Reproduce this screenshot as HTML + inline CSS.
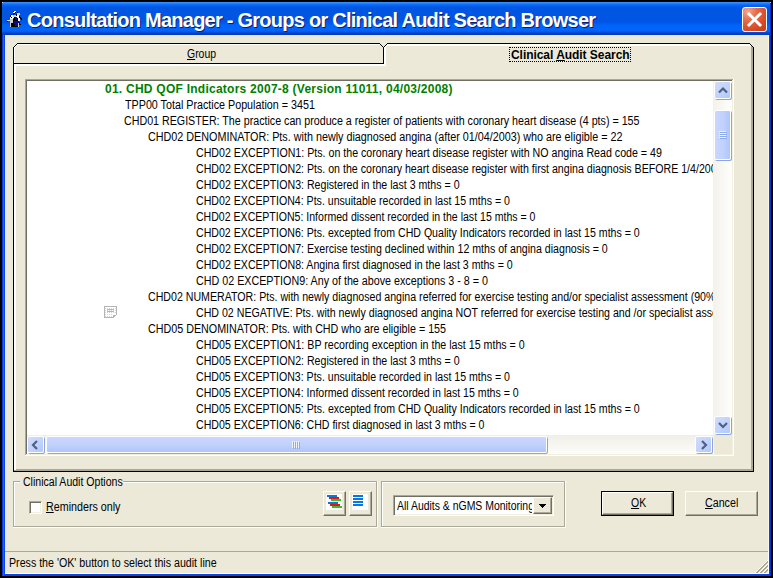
<!DOCTYPE html>
<html><head><meta charset="utf-8">
<style>
*{margin:0;padding:0;box-sizing:border-box}
html,body{width:773px;height:578px;overflow:hidden;background:#000}
body{position:relative;font-family:"Liberation Sans",sans-serif;font-size:11px;color:#000}
.a{position:absolute}
#frame{left:2px;top:2px;width:769px;height:574px;background:#0846ec}
#title{left:2px;top:2px;width:769px;height:33px;
 background:linear-gradient(to bottom,#3d95ff 0px,#2a85ff 1px,#0a66f4 3px,#0055e3 6px,#0055e4 20px,#0062f8 23px,#0066ff 28px,#0058ec 30px,#0042c8 31px,#0038b4 33px)}
#ttext{left:27px;top:9px;font-size:20px;font-weight:bold;color:#fff;letter-spacing:-0.75px;white-space:nowrap;text-shadow:1px 1px 0 #0a1e6e}
#close{left:742px;top:7px;width:25px;height:25px;border:1px solid #fff;border-radius:3px;
 background:radial-gradient(circle at 20% 15%,#f0a890 0%,#e46a4a 35%,#d84a26 70%,#c43a14 100%)}
#client{left:5px;top:35px;width:764px;height:539px;background:#ece9d8}
#list{left:27px;top:81px;width:687px;height:354px;background:#fff;overflow:hidden}
.ln{position:absolute;white-space:nowrap;line-height:16px;font-size:12px;transform:scaleX(0.885);transform-origin:0 0}
.g{color:#008000;font-weight:bold;letter-spacing:0.25px;transform:none}
.lbl{position:absolute;white-space:nowrap;line-height:16px;font-size:12px;transform:scaleX(0.87);transform-origin:0 0}
u{text-decoration:underline;text-underline-offset:1px;text-decoration-thickness:1px}
.track{background:linear-gradient(to right,#f3f1ec,#fefefb)}
.htrack{background:linear-gradient(to bottom,#f0eee8,#fdfdf9)}
.sb{position:absolute;border:1px solid #fff;border-radius:2px;
 background:linear-gradient(135deg,#d2dcfc 0%,#c3d3fd 50%,#b0c8fb 100%);
 box-shadow:1px 1px 0 #8ca6dc}
.btn{position:absolute;background:#ece9d8;border:1px solid;border-color:#fff #716f64 #716f64 #fff;box-shadow:inset -1px -1px 0 #aca899}
</style></head><body>
<div class="a" id="frame"></div>
<div class="a" id="title"></div>
<svg class="a" style="left:6px;top:11px" width="16" height="16" shape-rendering="crispEdges"><rect x="7" y="0" width="1" height="1" fill="#000"/><rect x="8" y="0" width="1" height="1" fill="#fff"/><rect x="9" y="0" width="1" height="1" fill="#fff"/><rect x="7" y="1" width="1" height="1" fill="#fff"/><rect x="8" y="1" width="1" height="1" fill="#fff"/><rect x="9" y="1" width="1" height="1" fill="#000"/><rect x="11" y="1" width="1" height="1" fill="#000"/><rect x="7" y="2" width="1" height="1" fill="#000"/><rect x="8" y="2" width="1" height="1" fill="#000"/><rect x="11" y="2" width="1" height="1" fill="#e8d4b0"/><rect x="12" y="2" width="1" height="1" fill="#e8d4b0"/><rect x="13" y="2" width="1" height="1" fill="#e8d4b0"/><rect x="5" y="3" width="1" height="1" fill="#000"/><rect x="7" y="3" width="1" height="1" fill="#000"/><rect x="10" y="3" width="1" height="1" fill="#000"/><rect x="11" y="3" width="1" height="1" fill="#e8d4b0"/><rect x="12" y="3" width="1" height="1" fill="#e8d4b0"/><rect x="13" y="3" width="1" height="1" fill="#e8d4b0"/><rect x="4" y="4" width="1" height="1" fill="#000"/><rect x="5" y="4" width="1" height="1" fill="#fff"/><rect x="6" y="4" width="1" height="1" fill="#fff"/><rect x="7" y="4" width="1" height="1" fill="#d4d0c8"/><rect x="8" y="4" width="1" height="1" fill="#d4d0c8"/><rect x="9" y="4" width="1" height="1" fill="#d4d0c8"/><rect x="10" y="4" width="1" height="1" fill="#000"/><rect x="11" y="4" width="1" height="1" fill="#fff"/><rect x="12" y="4" width="1" height="1" fill="#fff"/><rect x="4" y="5" width="1" height="1" fill="#000"/><rect x="5" y="5" width="1" height="1" fill="#fff"/><rect x="6" y="5" width="1" height="1" fill="#fff"/><rect x="7" y="5" width="1" height="1" fill="#d4d0c8"/><rect x="8" y="5" width="1" height="1" fill="#d4d0c8"/><rect x="9" y="5" width="1" height="1" fill="#d4d0c8"/><rect x="10" y="5" width="1" height="1" fill="#fff"/><rect x="11" y="5" width="1" height="1" fill="#fff"/><rect x="12" y="5" width="1" height="1" fill="#fff"/><rect x="13" y="5" width="1" height="1" fill="#000"/><rect x="4" y="6" width="1" height="1" fill="#fff"/><rect x="5" y="6" width="1" height="1" fill="#000"/><rect x="6" y="6" width="1" height="1" fill="#fff"/><rect x="7" y="6" width="1" height="1" fill="#fff"/><rect x="8" y="6" width="1" height="1" fill="#000"/><rect x="9" y="6" width="1" height="1" fill="#0a0a9a"/><rect x="10" y="6" width="1" height="1" fill="#0a0a9a"/><rect x="11" y="6" width="1" height="1" fill="#fff"/><rect x="12" y="6" width="1" height="1" fill="#fff"/><rect x="13" y="6" width="1" height="1" fill="#000"/><rect x="14" y="6" width="1" height="1" fill="#000"/><rect x="4" y="7" width="1" height="1" fill="#fff"/><rect x="5" y="7" width="1" height="1" fill="#fff"/><rect x="6" y="7" width="1" height="1" fill="#fff"/><rect x="8" y="7" width="1" height="1" fill="#000"/><rect x="9" y="7" width="1" height="1" fill="#0a0a9a"/><rect x="10" y="7" width="1" height="1" fill="#0a0a9a"/><rect x="11" y="7" width="1" height="1" fill="#000"/><rect x="12" y="7" width="1" height="1" fill="#fff"/><rect x="13" y="7" width="1" height="1" fill="#fff"/><rect x="14" y="7" width="1" height="1" fill="#000"/><rect x="15" y="7" width="1" height="1" fill="#000"/><rect x="4" y="8" width="1" height="1" fill="#d4d0c8"/><rect x="5" y="8" width="1" height="1" fill="#d4d0c8"/><rect x="6" y="8" width="1" height="1" fill="#d4d0c8"/><rect x="7" y="8" width="1" height="1" fill="#000"/><rect x="8" y="8" width="1" height="1" fill="#000"/><rect x="9" y="8" width="1" height="1" fill="#0a0a9a"/><rect x="10" y="8" width="1" height="1" fill="#0a0a9a"/><rect x="11" y="8" width="1" height="1" fill="#000"/><rect x="12" y="8" width="1" height="1" fill="#fff"/><rect x="13" y="8" width="1" height="1" fill="#fff"/><rect x="15" y="8" width="1" height="1" fill="#000"/><rect x="1" y="9" width="1" height="1" fill="#e8d4b0"/><rect x="2" y="9" width="1" height="1" fill="#e8d4b0"/><rect x="3" y="9" width="1" height="1" fill="#e8d4b0"/><rect x="4" y="9" width="1" height="1" fill="#d4d0c8"/><rect x="5" y="9" width="1" height="1" fill="#d4d0c8"/><rect x="6" y="9" width="1" height="1" fill="#d4d0c8"/><rect x="7" y="9" width="1" height="1" fill="#000"/><rect x="8" y="9" width="1" height="1" fill="#000"/><rect x="9" y="9" width="1" height="1" fill="#000"/><rect x="10" y="9" width="1" height="1" fill="#000"/><rect x="11" y="9" width="1" height="1" fill="#000"/><rect x="12" y="9" width="1" height="1" fill="#fff"/><rect x="13" y="9" width="1" height="1" fill="#fff"/><rect x="1" y="10" width="1" height="1" fill="#000"/><rect x="4" y="10" width="1" height="1" fill="#d4d0c8"/><rect x="5" y="10" width="1" height="1" fill="#d4d0c8"/><rect x="6" y="10" width="1" height="1" fill="#d4d0c8"/><rect x="7" y="10" width="1" height="1" fill="#000"/><rect x="8" y="10" width="1" height="1" fill="#0a0a9a"/><rect x="9" y="10" width="1" height="1" fill="#0a0a9a"/><rect x="10" y="10" width="1" height="1" fill="#0a0a9a"/><rect x="11" y="10" width="1" height="1" fill="#0a0a9a"/><rect x="12" y="10" width="1" height="1" fill="#000"/><rect x="4" y="11" width="1" height="1" fill="#d4d0c8"/><rect x="5" y="11" width="1" height="1" fill="#d4d0c8"/><rect x="6" y="11" width="1" height="1" fill="#d4d0c8"/><rect x="7" y="11" width="1" height="1" fill="#000"/><rect x="8" y="11" width="1" height="1" fill="#0a0a9a"/><rect x="9" y="11" width="1" height="1" fill="#0a0a9a"/><rect x="10" y="11" width="1" height="1" fill="#0a0a9a"/><rect x="11" y="11" width="1" height="1" fill="#0a0a9a"/><rect x="12" y="11" width="1" height="1" fill="#0a0a9a"/><rect x="13" y="11" width="1" height="1" fill="#000"/><rect x="4" y="12" width="1" height="1" fill="#d4d0c8"/><rect x="5" y="12" width="1" height="1" fill="#000"/><rect x="6" y="12" width="1" height="1" fill="#000"/><rect x="7" y="12" width="1" height="1" fill="#000"/><rect x="8" y="12" width="1" height="1" fill="#0a0a9a"/><rect x="9" y="12" width="1" height="1" fill="#0a0a9a"/><rect x="10" y="12" width="1" height="1" fill="#0a0a9a"/><rect x="11" y="12" width="1" height="1" fill="#0a0a9a"/><rect x="12" y="12" width="1" height="1" fill="#d4d0c8"/><rect x="13" y="12" width="1" height="1" fill="#000"/><rect x="4" y="13" width="1" height="1" fill="#d4d0c8"/><rect x="5" y="13" width="1" height="1" fill="#000"/><rect x="6" y="13" width="1" height="1" fill="#000"/><rect x="7" y="13" width="1" height="1" fill="#000"/><rect x="8" y="13" width="1" height="1" fill="#000"/><rect x="9" y="13" width="1" height="1" fill="#0a0a9a"/><rect x="10" y="13" width="1" height="1" fill="#0a0a9a"/><rect x="11" y="13" width="1" height="1" fill="#0a0a9a"/><rect x="12" y="13" width="1" height="1" fill="#d4d0c8"/><rect x="13" y="13" width="1" height="1" fill="#000"/><rect x="14" y="13" width="1" height="1" fill="#000"/><rect x="4" y="14" width="1" height="1" fill="#d4d0c8"/><rect x="5" y="14" width="1" height="1" fill="#000"/><rect x="6" y="14" width="1" height="1" fill="#000"/><rect x="7" y="14" width="1" height="1" fill="#000"/><rect x="8" y="14" width="1" height="1" fill="#000"/><rect x="9" y="14" width="1" height="1" fill="#0a0a9a"/><rect x="10" y="14" width="1" height="1" fill="#0a0a9a"/><rect x="11" y="14" width="1" height="1" fill="#0a0a9a"/><rect x="12" y="14" width="1" height="1" fill="#d4d0c8"/><rect x="4" y="15" width="1" height="1" fill="#d4d0c8"/><rect x="5" y="15" width="1" height="1" fill="#000"/><rect x="6" y="15" width="1" height="1" fill="#000"/><rect x="7" y="15" width="1" height="1" fill="#000"/><rect x="8" y="15" width="1" height="1" fill="#000"/><rect x="9" y="15" width="1" height="1" fill="#000"/><rect x="10" y="15" width="1" height="1" fill="#000"/><rect x="11" y="15" width="1" height="1" fill="#000"/><rect x="12" y="15" width="1" height="1" fill="#d4d0c8"/></svg>
<div class="a" id="ttext">Consultation Manager - Groups or Clinical Audit Search Browser</div>
<div class="a" id="close"></div>
<svg class="a" style="left:742px;top:7px" width="25" height="25" viewBox="0 0 25 25">
 <path d="M7 7 L18 18 M18 7 L7 18" stroke="#fff" stroke-width="3" stroke-linecap="square"/>
</svg>
<div class="a" id="client"></div>
<div class="a" style="left:768px;top:35px;width:1px;height:539px;background:#fbf6e2"></div><div class="a" style="left:770px;top:2px;width:1px;height:574px;background:#0434d0"></div><div class="a" style="left:770px;top:2px;width:1px;height:1px;background:#90b8ff"></div><div class="a" style="left:2px;top:2px;width:1px;height:1px;background:#c8dcff"></div>
<div class="a" style="left:2px;top:35px;width:1px;height:541px;background:#0838d8"></div><div class="a" style="left:3px;top:35px;width:1px;height:541px;background:#1868f0"></div>

<!-- tab labels -->
<div class="lbl" style="left:187px;top:46px"><u>G</u>roup</div>
<div class="lbl" style="left:511px;top:47px;font-weight:bold;letter-spacing:-0.05px;transform:none">Clinical <u>A</u>udit Search</div>
<div class="a" style="left:509px;top:47px;width:122px;height:15px;border:1px dotted #000"></div>

<!-- listbox -->
<div class="a" style="left:27px;top:81px;width:705px;height:373px;background:#ece9d8"></div>
<div class="a" id="list"><div class="ln g" style="left:78px;top:0px">01. CHD QOF Indicators 2007-8 (Version 11011, 04/03/2008)</div><div class="ln" style="left:98px;top:16px;transform:scaleX(0.8945)">TPP00 Total Practice Population = 3451</div><div class="ln" style="left:97px;top:32px;transform:scaleX(0.8902)">CHD01 REGISTER: The practice can produce a register of patients with coronary heart disease (4 pts) = 155</div><div class="ln" style="left:121px;top:48px;transform:scaleX(0.8983)">CHD02 DENOMINATOR: Pts. with newly diagnosed angina (after 01/04/2003) who are eligible = 22</div><div class="ln" style="left:169px;top:64px;transform:scaleX(0.8869)">CHD02 EXCEPTION1: Pts. on the coronary heart disease register with NO angina Read code = 49</div><div class="ln" style="left:169px;top:80px">CHD02 EXCEPTION2: Pts. on the coronary heart disease register with first angina diagnosis BEFORE 1/4/2003</div><div class="ln" style="left:169px;top:96px;transform:scaleX(0.8850)">CHD02 EXCEPTION3: Registered in the last 3 mths = 0</div><div class="ln" style="left:169px;top:112px;transform:scaleX(0.8822)">CHD02 EXCEPTION4: Pts. unsuitable recorded in last 15 mths = 0</div><div class="ln" style="left:169px;top:128px;transform:scaleX(0.8798)">CHD02 EXCEPTION5: Informed dissent recorded in the last 15 mths = 0</div><div class="ln" style="left:169px;top:144px;transform:scaleX(0.8830)">CHD02 EXCEPTION6: Pts. excepted from CHD Quality Indicators recorded in last 15 mths = 0</div><div class="ln" style="left:169px;top:160px;transform:scaleX(0.8850)">CHD02 EXCEPTION7: Exercise testing declined within 12 mths of angina diagnosis = 0</div><div class="ln" style="left:169px;top:176px;transform:scaleX(0.8850)">CHD02 EXCEPTION8: Angina first diagnosed in the last 3 mths = 0</div><div class="ln" style="left:169px;top:192px;transform:scaleX(0.8943)">CHD 02 EXCEPTION9: Any of the above exceptions 3 - 8 = 0</div><div class="ln" style="left:121px;top:208px">CHD02 NUMERATOR: Pts. with newly diagnosed angina referred for exercise testing and/or specialist assessment (90%)</div><div class="ln" style="left:169px;top:224px">CHD 02 NEGATIVE: Pts. with newly diagnosed angina NOT referred for exercise testing and /or specialist assessment</div><div class="ln" style="left:121px;top:240px;transform:scaleX(0.8941)">CHD05 DENOMINATOR: Pts. with CHD who are eligible = 155</div><div class="ln" style="left:169px;top:256px;transform:scaleX(0.8877)">CHD05 EXCEPTION1: BP recording exception in the last 15 mths = 0</div><div class="ln" style="left:169px;top:272px;transform:scaleX(0.8850)">CHD05 EXCEPTION2: Registered in the last 3 mths = 0</div><div class="ln" style="left:169px;top:288px;transform:scaleX(0.8822)">CHD05 EXCEPTION3: Pts. unsuitable recorded in last 15 mths = 0</div><div class="ln" style="left:169px;top:304px;transform:scaleX(0.8822)">CHD05 EXCEPTION4: Informed dissent recorded in last 15 mths = 0</div><div class="ln" style="left:169px;top:320px;transform:scaleX(0.8830)">CHD05 EXCEPTION5: Pts. excepted from CHD Quality Indicators recorded in last 15 mths = 0</div><div class="ln" style="left:169px;top:336px;transform:scaleX(0.8819)">CHD05 EXCEPTION6: CHD first diagnosed in last 3 mths = 0</div></div>
<svg class="a" style="left:104px;top:306px" width="13" height="12" viewBox="0 0 13 12" shape-rendering="crispEdges"><path d="M0.5 0.5H12.5V8.5L9.5 11.5H0.5Z" fill="#fff" stroke="#b4b4b4"/><g fill="#f0f000"><rect x="1" y="2" width="1" height="1"/><rect x="3" y="2" width="1" height="1"/><rect x="5" y="2" width="1" height="1"/><rect x="7" y="2" width="1" height="1"/><rect x="9" y="2" width="1" height="1"/><rect x="11" y="2" width="1" height="1"/><rect x="1" y="4" width="1" height="1"/><rect x="3" y="4" width="1" height="1"/><rect x="5" y="4" width="1" height="1"/><rect x="7" y="4" width="1" height="1"/><rect x="9" y="4" width="1" height="1"/><rect x="11" y="4" width="1" height="1"/><rect x="1" y="6" width="1" height="1"/><rect x="3" y="6" width="1" height="1"/><rect x="5" y="6" width="1" height="1"/><rect x="7" y="6" width="1" height="1"/><rect x="9" y="6" width="1" height="1"/><rect x="11" y="6" width="1" height="1"/><rect x="1" y="8" width="1" height="1"/><rect x="3" y="8" width="1" height="1"/><rect x="5" y="8" width="1" height="1"/><rect x="7" y="8" width="1" height="1"/><rect x="1" y="10" width="1" height="1"/><rect x="3" y="10" width="1" height="1"/><rect x="5" y="10" width="1" height="1"/><rect x="7" y="10" width="1" height="1"/></g><rect x="3" y="3" width="7" height="1" fill="#b4b4b4"/><rect x="3" y="5" width="7" height="1" fill="#b4b4b4"/><path d="M9.5 11V9.5H12" stroke="#b4b4b4" fill="none"/></svg>
<!-- vertical scrollbar -->
<div class="a track" style="left:713px;top:81px;width:19px;height:354px"></div>
<div class="sb" style="left:714px;top:81px;width:17px;height:18px"></div>
<svg class="a" style="left:714px;top:81px" width="18" height="18"><path d="M5 11.5L9 7.5L13 11.5" stroke="#4d6185" stroke-width="2.2" fill="none"/></svg>
<div class="sb" style="left:714px;top:110px;width:17px;height:50px;background:linear-gradient(to right,#cad6fd 0%,#c2d2fd 50%,#aec6fa 100%)"></div>
<svg class="a" style="left:718px;top:131px" width="9" height="8" shape-rendering="crispEdges"><g fill="#eef4fe"><rect x="1" y="0" width="7" height="1"/><rect x="1" y="2" width="7" height="1"/><rect x="1" y="4" width="7" height="1"/><rect x="1" y="6" width="7" height="1"/></g><g fill="#8faae8"><rect x="2" y="1" width="7" height="1"/><rect x="2" y="3" width="7" height="1"/><rect x="2" y="5" width="7" height="1"/><rect x="2" y="7" width="7" height="1"/></g></svg>
<div class="sb" style="left:714px;top:416px;width:17px;height:18px"></div>
<svg class="a" style="left:714px;top:416px" width="18" height="18"><path d="M5 7L9 11L13 7" stroke="#4d6185" stroke-width="2.2" fill="none"/></svg>
<!-- horizontal scrollbar -->
<div class="a htrack" style="left:27px;top:435px;width:687px;height:19px"></div>
<div class="sb" style="left:27px;top:436px;width:17px;height:17px"></div>
<svg class="a" style="left:26px;top:436px" width="18" height="18"><path d="M11 5L7 9L11 13" stroke="#4d6185" stroke-width="2.2" fill="none"/></svg>
<div class="sb" style="left:46px;top:436px;width:501px;height:17px;background:linear-gradient(to bottom,#cad6fd 0%,#c2d2fd 50%,#aec6fa 100%)"></div>
<svg class="a" style="left:292px;top:440px" width="9" height="9" shape-rendering="crispEdges"><g fill="#eef4fe"><rect x="0" y="1" width="1" height="7"/><rect x="2" y="1" width="1" height="7"/><rect x="4" y="1" width="1" height="7"/><rect x="6" y="1" width="1" height="7"/></g><g fill="#8faae8"><rect x="1" y="2" width="1" height="7"/><rect x="3" y="2" width="1" height="7"/><rect x="5" y="2" width="1" height="7"/><rect x="7" y="2" width="1" height="7"/></g></svg>
<div class="sb" style="left:695px;top:436px;width:17px;height:17px"></div>
<svg class="a" style="left:695px;top:436px" width="18" height="18"><path d="M7 5L11 9L7 13" stroke="#4d6185" stroke-width="2.2" fill="none"/></svg>

<svg class="a" style="left:0;top:0" width="773" height="578" shape-rendering="crispEdges"><rect x="13" y="47" width="1" height="425" fill="#000000"/><rect x="14" y="46" width="1" height="1" fill="#000000"/><rect x="15" y="45" width="1" height="1" fill="#000000"/><rect x="16" y="44" width="1" height="1" fill="#000000"/><rect x="17" y="43" width="363" height="1" fill="#000000"/><rect x="380" y="44" width="1" height="1" fill="#000000"/><rect x="381" y="45" width="1" height="1" fill="#000000"/><rect x="382" y="46" width="1" height="1" fill="#000000"/><rect x="383" y="47" width="1" height="17" fill="#000000"/><rect x="14" y="47" width="1" height="424" fill="#ffffff"/><rect x="15" y="66" width="1" height="405" fill="#ffffff"/><rect x="17" y="44" width="363" height="1" fill="#ffffff"/><rect x="15" y="46" width="1" height="1" fill="#ffffff"/><rect x="16" y="45" width="1" height="1" fill="#ffffff"/><rect x="13" y="63" width="371" height="1" fill="#000000"/><rect x="14" y="64" width="372" height="1" fill="#ffffff"/><rect x="14" y="65" width="372" height="1" fill="#ffffff"/><rect x="384" y="46" width="1" height="1" fill="#000000"/><rect x="385" y="45" width="1" height="1" fill="#000000"/><rect x="386" y="44" width="1" height="1" fill="#000000"/><rect x="387" y="43" width="363" height="1" fill="#000000"/><rect x="750" y="44" width="1" height="1" fill="#000000"/><rect x="751" y="45" width="1" height="1" fill="#000000"/><rect x="752" y="46" width="1" height="1" fill="#000000"/><rect x="753" y="47" width="1" height="425" fill="#000000"/><rect x="384" y="47" width="1" height="19" fill="#ffffff"/><rect x="385" y="46" width="1" height="20" fill="#ffffff"/><rect x="386" y="45" width="1" height="1" fill="#ffffff"/><rect x="387" y="44" width="363" height="1" fill="#ffffff"/><rect x="386" y="45" width="365" height="1" fill="#ffffff"/><rect x="752" y="47" width="1" height="424" fill="#aca899"/><rect x="751" y="47" width="1" height="424" fill="#aca899"/><rect x="751" y="46" width="1" height="1" fill="#aca899"/><rect x="13" y="471" width="741" height="1" fill="#000000"/><rect x="14" y="470" width="739" height="1" fill="#aca899"/><rect x="16" y="469" width="737" height="1" fill="#aca899"/><rect x="25" y="79" width="708" height="1" fill="#aca899"/><rect x="25" y="79" width="1" height="376" fill="#aca899"/><rect x="26" y="80" width="706" height="1" fill="#716f64"/><rect x="26" y="80" width="1" height="374" fill="#716f64"/><rect x="25" y="455" width="709" height="1" fill="#ffffff"/><rect x="733" y="79" width="1" height="377" fill="#ffffff"/><rect x="26" y="454" width="707" height="1" fill="#f1efe2"/><rect x="732" y="80" width="1" height="375" fill="#f1efe2"/><rect x="13" y="481" width="7" height="1" fill="#aca899"/><rect x="123" y="481" width="254" height="1" fill="#aca899"/><rect x="14" y="482" width="6" height="1" fill="#ffffff"/><rect x="123" y="482" width="253" height="1" fill="#ffffff"/><rect x="13" y="481" width="1" height="46" fill="#aca899"/><rect x="14" y="482" width="1" height="44" fill="#ffffff"/><rect x="13" y="526" width="364" height="1" fill="#aca899"/><rect x="13" y="527" width="365" height="1" fill="#ffffff"/><rect x="376" y="481" width="1" height="46" fill="#aca899"/><rect x="377" y="481" width="1" height="47" fill="#ffffff"/><rect x="381" y="481" width="184" height="1" fill="#aca899"/><rect x="382" y="482" width="182" height="1" fill="#ffffff"/><rect x="381" y="481" width="1" height="46" fill="#aca899"/><rect x="382" y="482" width="1" height="44" fill="#ffffff"/><rect x="381" y="526" width="184" height="1" fill="#aca899"/><rect x="381" y="527" width="185" height="1" fill="#ffffff"/><rect x="564" y="481" width="1" height="46" fill="#aca899"/><rect x="565" y="481" width="1" height="47" fill="#ffffff"/><rect x="5" y="551" width="763" height="1" fill="#aca899"/><rect x="768" y="551" width="1" height="23" fill="#ffffff"/><rect x="5" y="573" width="764" height="1" fill="#ffffff"/></svg>

<!-- group box 1 -->
<div class="lbl" style="left:23px;top:474px;transform:scaleX(0.879)">Clinical Audit Options</div>
<div class="a" style="left:29px;top:501px;width:13px;height:13px;border:1px solid;border-color:#aca899 #fff #fff #aca899;background:#fff;box-shadow:inset 1px 1px 0 #716f64,inset -1px -1px 0 #f1efe2"></div>
<div class="lbl" style="left:46px;top:499px;transform:scaleX(0.893)"><u>R</u>eminders only</div>
<div class="btn" style="left:323px;top:491px;width:23px;height:25px"></div>
<svg class="a" style="left:323px;top:491px" width="23" height="25" shape-rendering="crispEdges">
 <rect x="3" y="3" width="16" height="16" fill="#fff"/>
 <rect x="4" y="4" width="10" height="2" fill="#0a78d8"/>
 <rect x="6" y="6" width="10" height="2" fill="#f01010"/>
 <rect x="8" y="8" width="10" height="2" fill="#30c030"/>
 <rect x="5" y="11" width="10" height="2" fill="#0a78d8"/>
 <rect x="7" y="13" width="10" height="2" fill="#f01010"/>
 <rect x="9" y="15" width="10" height="2" fill="#30c030"/>
</svg>
<div class="btn" style="left:349px;top:491px;width:23px;height:25px"></div>
<svg class="a" style="left:349px;top:491px" width="23" height="25" shape-rendering="crispEdges">
 <rect x="3" y="3" width="16" height="16" fill="#fff"/>
 <rect x="4" y="4" width="10" height="2" fill="#0a78d8"/>
 <rect x="4" y="7" width="10" height="2" fill="#0a78d8"/>
 <rect x="4" y="10" width="10" height="2" fill="#0a78d8"/>
 <rect x="4" y="13" width="10" height="2" fill="#0a78d8"/>
</svg>
<!-- dropdown -->
<div class="a" style="left:393px;top:495px;width:161px;height:21px;border:1px solid;border-color:#aca899 #fff #fff #aca899;background:#fff;box-shadow:inset 1px 1px 0 #716f64,inset -1px -1px 0 #f1efe2"></div>
<div class="a" style="left:395px;top:498px;width:137px;height:16px;overflow:hidden"><div class="lbl" style="left:2px;top:0px">All Audits &amp; nGMS Monitoring</div></div>
<div class="btn" style="left:533px;top:497px;width:19px;height:17px"></div>
<svg class="a" style="left:533px;top:498px" width="19" height="16" shape-rendering="crispEdges"><path d="M6 6H13V7H12V8H11V9H10V10H9V9H8V8H7V7H6Z" fill="#000"/></svg>
<!-- OK / Cancel -->
<div class="a" style="left:601px;top:491px;width:73px;height:25px;border:1px solid #000"></div>
<div class="btn" style="left:602px;top:492px;width:71px;height:23px"></div>
<div class="lbl" style="left:631px;top:495px"><u>O</u>K</div>
<div class="btn" style="left:685px;top:491px;width:73px;height:25px"></div>
<div class="lbl" style="left:705px;top:495px;transform:scaleX(0.89)"><u>C</u>ancel</div>

<!-- status -->
<div class="lbl" style="left:9px;top:555px;transform:scaleX(0.887)">Press the 'OK' button to select this audit line</div>
<svg class="a" style="left:755px;top:560px" width="13" height="13" shape-rendering="crispEdges"><rect x="0" y="12" width="1" height="1" fill="#ffffff"/><rect x="1" y="11" width="1" height="1" fill="#ffffff"/><rect x="1" y="12" width="1" height="1" fill="#aca899"/><rect x="2" y="10" width="1" height="1" fill="#ffffff"/><rect x="2" y="11" width="1" height="1" fill="#aca899"/><rect x="2" y="12" width="1" height="1" fill="#aca899"/><rect x="3" y="9" width="1" height="1" fill="#ffffff"/><rect x="3" y="10" width="1" height="1" fill="#aca899"/><rect x="3" y="11" width="1" height="1" fill="#aca899"/><rect x="4" y="8" width="1" height="1" fill="#ffffff"/><rect x="4" y="9" width="1" height="1" fill="#aca899"/><rect x="4" y="10" width="1" height="1" fill="#aca899"/><rect x="4" y="12" width="1" height="1" fill="#ffffff"/><rect x="5" y="7" width="1" height="1" fill="#ffffff"/><rect x="5" y="8" width="1" height="1" fill="#aca899"/><rect x="5" y="9" width="1" height="1" fill="#aca899"/><rect x="5" y="11" width="1" height="1" fill="#ffffff"/><rect x="5" y="12" width="1" height="1" fill="#aca899"/><rect x="6" y="6" width="1" height="1" fill="#ffffff"/><rect x="6" y="7" width="1" height="1" fill="#aca899"/><rect x="6" y="8" width="1" height="1" fill="#aca899"/><rect x="6" y="10" width="1" height="1" fill="#ffffff"/><rect x="6" y="11" width="1" height="1" fill="#aca899"/><rect x="6" y="12" width="1" height="1" fill="#aca899"/><rect x="7" y="5" width="1" height="1" fill="#ffffff"/><rect x="7" y="6" width="1" height="1" fill="#aca899"/><rect x="7" y="7" width="1" height="1" fill="#aca899"/><rect x="7" y="9" width="1" height="1" fill="#ffffff"/><rect x="7" y="10" width="1" height="1" fill="#aca899"/><rect x="7" y="11" width="1" height="1" fill="#aca899"/><rect x="8" y="4" width="1" height="1" fill="#ffffff"/><rect x="8" y="5" width="1" height="1" fill="#aca899"/><rect x="8" y="6" width="1" height="1" fill="#aca899"/><rect x="8" y="8" width="1" height="1" fill="#ffffff"/><rect x="8" y="9" width="1" height="1" fill="#aca899"/><rect x="8" y="10" width="1" height="1" fill="#aca899"/><rect x="8" y="12" width="1" height="1" fill="#ffffff"/><rect x="9" y="3" width="1" height="1" fill="#ffffff"/><rect x="9" y="4" width="1" height="1" fill="#aca899"/><rect x="9" y="5" width="1" height="1" fill="#aca899"/><rect x="9" y="7" width="1" height="1" fill="#ffffff"/><rect x="9" y="8" width="1" height="1" fill="#aca899"/><rect x="9" y="9" width="1" height="1" fill="#aca899"/><rect x="9" y="11" width="1" height="1" fill="#ffffff"/><rect x="9" y="12" width="1" height="1" fill="#aca899"/><rect x="10" y="2" width="1" height="1" fill="#ffffff"/><rect x="10" y="3" width="1" height="1" fill="#aca899"/><rect x="10" y="4" width="1" height="1" fill="#aca899"/><rect x="10" y="6" width="1" height="1" fill="#ffffff"/><rect x="10" y="7" width="1" height="1" fill="#aca899"/><rect x="10" y="8" width="1" height="1" fill="#aca899"/><rect x="10" y="10" width="1" height="1" fill="#ffffff"/><rect x="10" y="11" width="1" height="1" fill="#aca899"/><rect x="10" y="12" width="1" height="1" fill="#aca899"/><rect x="11" y="1" width="1" height="1" fill="#ffffff"/><rect x="11" y="2" width="1" height="1" fill="#aca899"/><rect x="11" y="3" width="1" height="1" fill="#aca899"/><rect x="11" y="5" width="1" height="1" fill="#ffffff"/><rect x="11" y="6" width="1" height="1" fill="#aca899"/><rect x="11" y="7" width="1" height="1" fill="#aca899"/><rect x="11" y="9" width="1" height="1" fill="#ffffff"/><rect x="11" y="10" width="1" height="1" fill="#aca899"/><rect x="11" y="11" width="1" height="1" fill="#aca899"/><rect x="12" y="0" width="1" height="1" fill="#ffffff"/><rect x="12" y="1" width="1" height="1" fill="#aca899"/><rect x="12" y="2" width="1" height="1" fill="#aca899"/><rect x="12" y="4" width="1" height="1" fill="#ffffff"/><rect x="12" y="5" width="1" height="1" fill="#aca899"/><rect x="12" y="6" width="1" height="1" fill="#aca899"/><rect x="12" y="8" width="1" height="1" fill="#ffffff"/><rect x="12" y="9" width="1" height="1" fill="#aca899"/><rect x="12" y="10" width="1" height="1" fill="#aca899"/></svg>
</body></html>
